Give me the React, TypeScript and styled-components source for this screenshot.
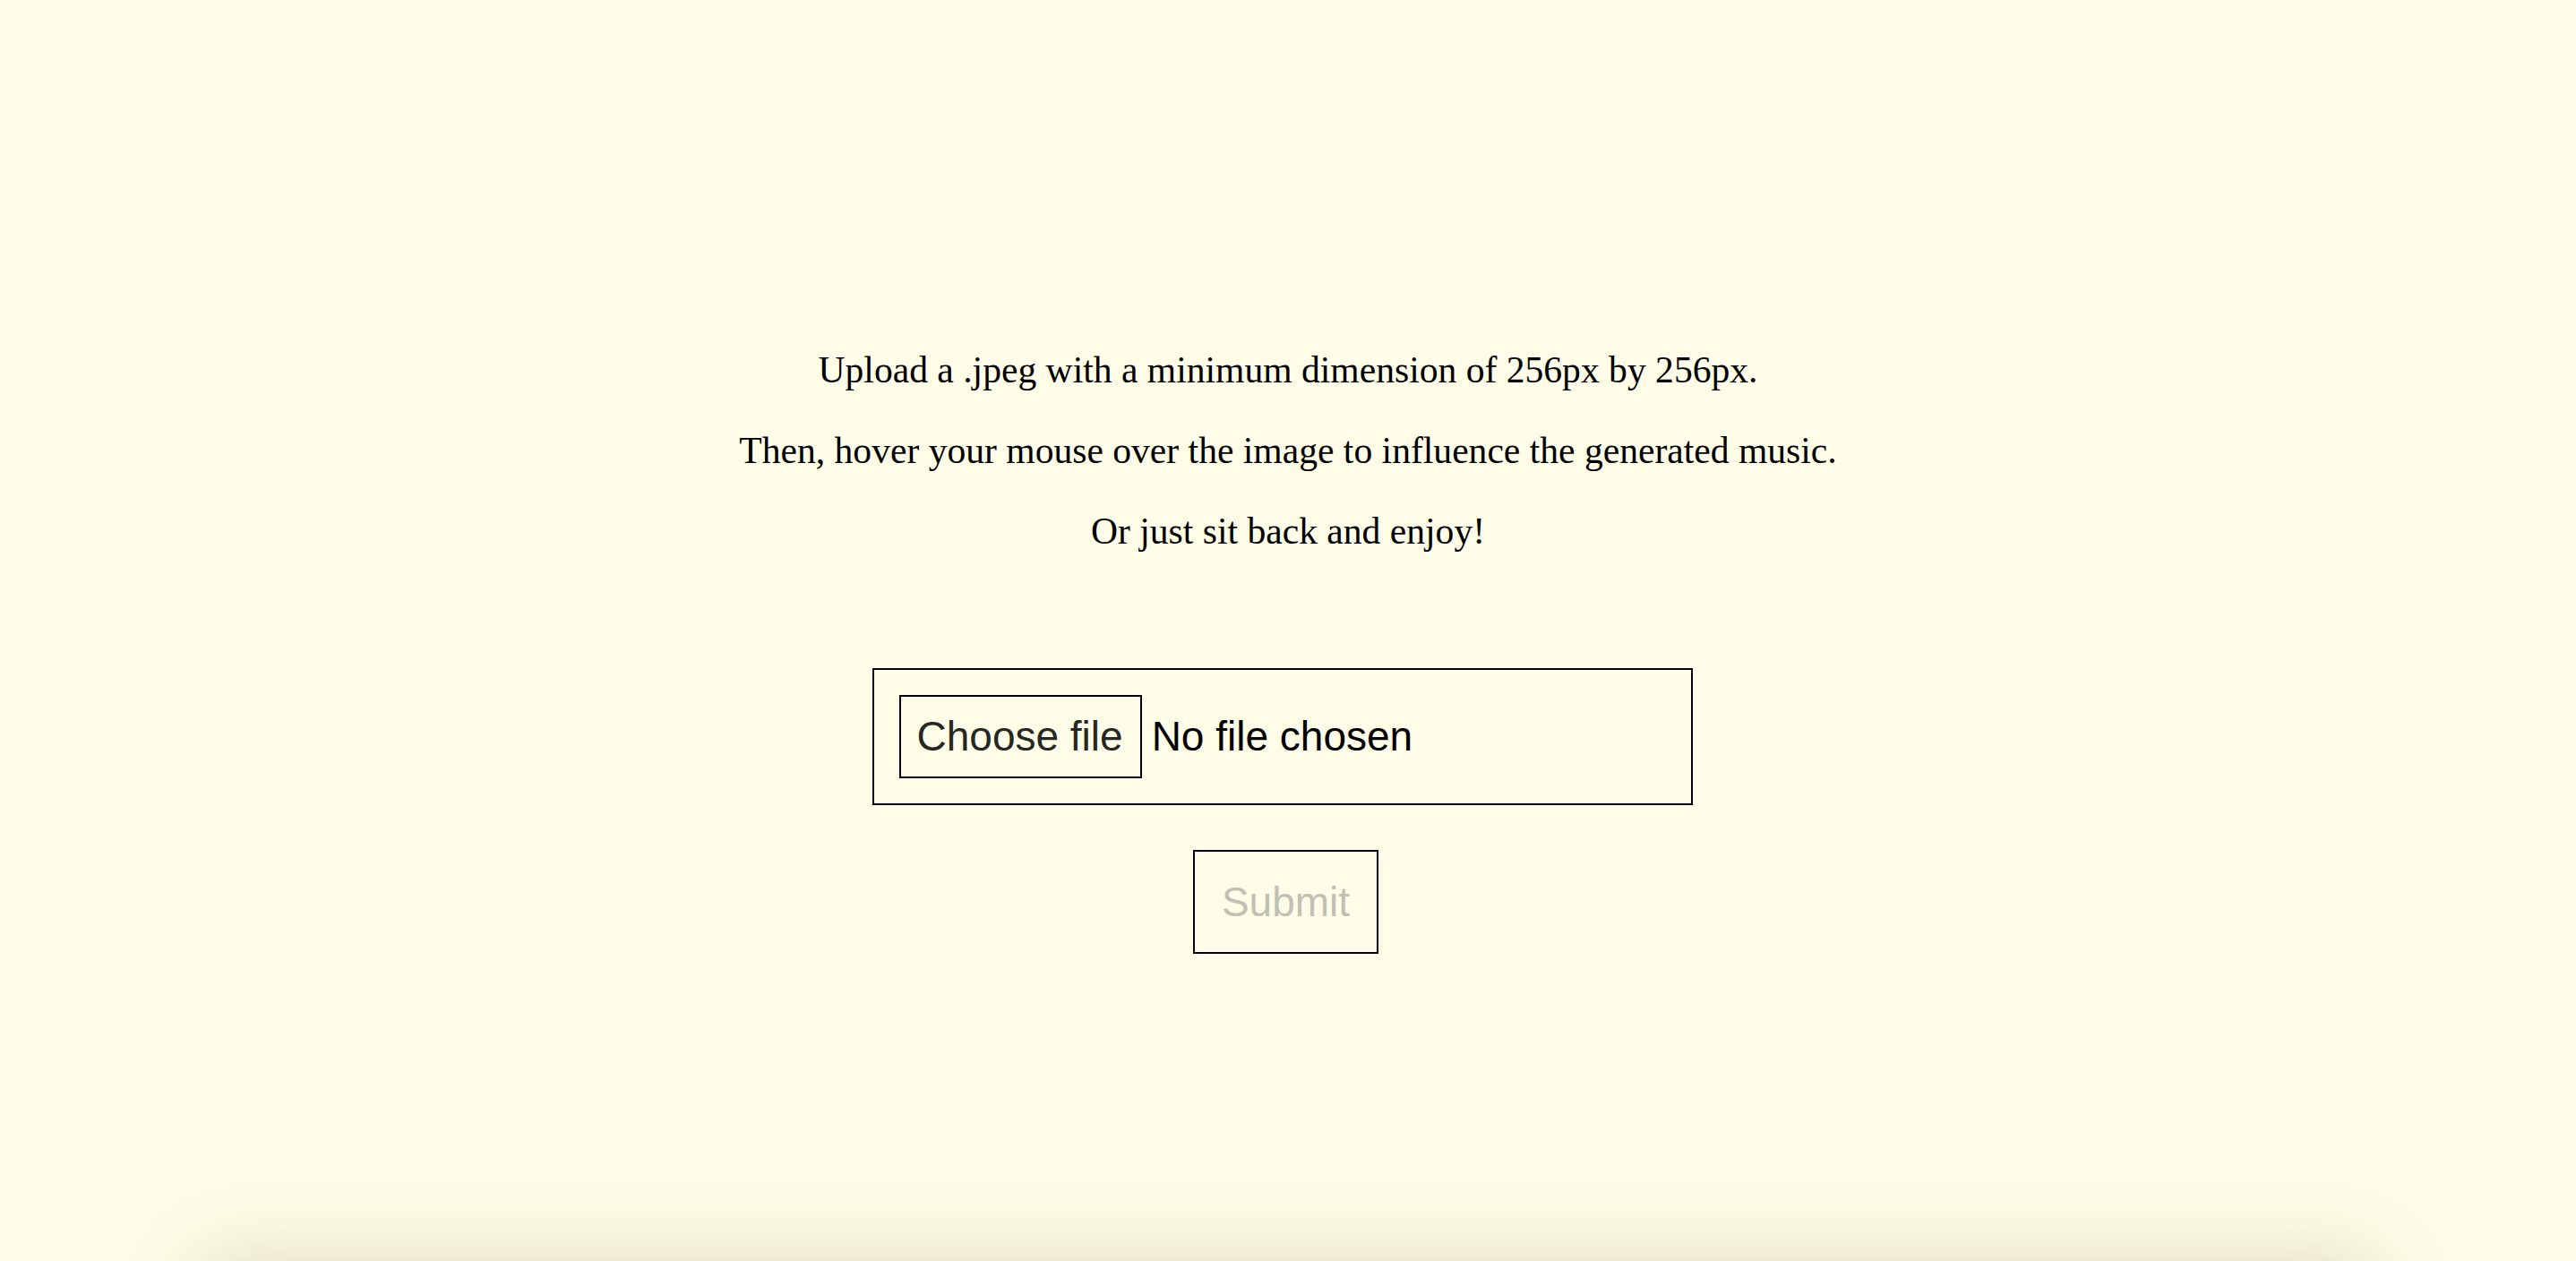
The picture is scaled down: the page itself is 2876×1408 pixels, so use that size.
import React from 'react';
import styled, { createGlobalStyle } from 'styled-components';

const GlobalStyle = createGlobalStyle`
  html, body {
    margin: 0;
    padding: 0;
    background-color: #fffde7;
  }
`;

const Page = styled.main`
  display: flex;
  flex-direction: column;
  align-items: center;
  height: 100vh;
  overflow: hidden;
  padding-top: 389px;
  box-sizing: border-box;
  background-color: #fffde7;
`;

const Intro = styled.div`
  display: flex;
  flex-direction: column;
  align-items: center;
  gap: 42px;
`;

const Line = styled.p`
  margin: 0;
  font-family: 'Liberation Serif', 'Times New Roman', serif;
  font-size: 41.6px;
  line-height: 48px;
  color: #000;
`;

const UploadForm = styled.form`
  display: flex;
  flex-direction: column;
  align-items: center;
  gap: 50px;
  margin-top: 129px;
`;

const FilePicker = styled.label`
  display: flex;
  align-items: center;
  gap: 11px;
  width: 916px;
  margin-right: 13px;
  padding: 28px;
  box-sizing: border-box;
  border: 2px solid #000;
  cursor: pointer;

  & input {
    display: none;
  }
`;

const ChooseButton = styled.span`
  padding: 18px 19px 18px 18px;
  border: 2px solid #000;
  font-family: 'Liberation Sans', Arial, sans-serif;
  font-size: 46px;
  line-height: 53px;
  color: #262622;
`;

const FileName = styled.span`
  font-family: 'Liberation Sans', Arial, sans-serif;
  font-size: 46px;
  line-height: 53px;
  color: #000;
`;

const SubmitButton = styled.button`
  margin-right: 5px;
  padding: 30px 30px 29px;
  border: 2px solid #000;
  border-radius: 0;
  background: transparent;
  font-family: 'Liberation Sans', Arial, sans-serif;
  font-size: 46px;
  line-height: 53px;
  color: #c1c0b3;

  &:disabled {
    cursor: default;
  }
`;

const PlayerPanel = styled.section`
  flex-shrink: 0;
  width: 2420px;
  height: 600px;
  margin-top: 350px;
  background-color: #fffde7;
  box-shadow: 0 0 90px rgba(70, 60, 0, 0.22);
`;

export default function App() {
  return (
    <>
      <GlobalStyle />
      <Page>
        <Intro>
          <Line>Upload a .jpeg with a minimum dimension of 256px by 256px.</Line>
          <Line>Then, hover your mouse over the image to influence the generated music.</Line>
          <Line>Or just sit back and enjoy!</Line>
        </Intro>
        <UploadForm onSubmit={(e) => e.preventDefault()}>
          <FilePicker>
            <input type="file" accept="image/jpeg" />
            <ChooseButton>Choose file</ChooseButton>
            <FileName>No file chosen</FileName>
          </FilePicker>
          <SubmitButton type="submit" disabled>
            Submit
          </SubmitButton>
        </UploadForm>
        <PlayerPanel />
      </Page>
    </>
  );
}
